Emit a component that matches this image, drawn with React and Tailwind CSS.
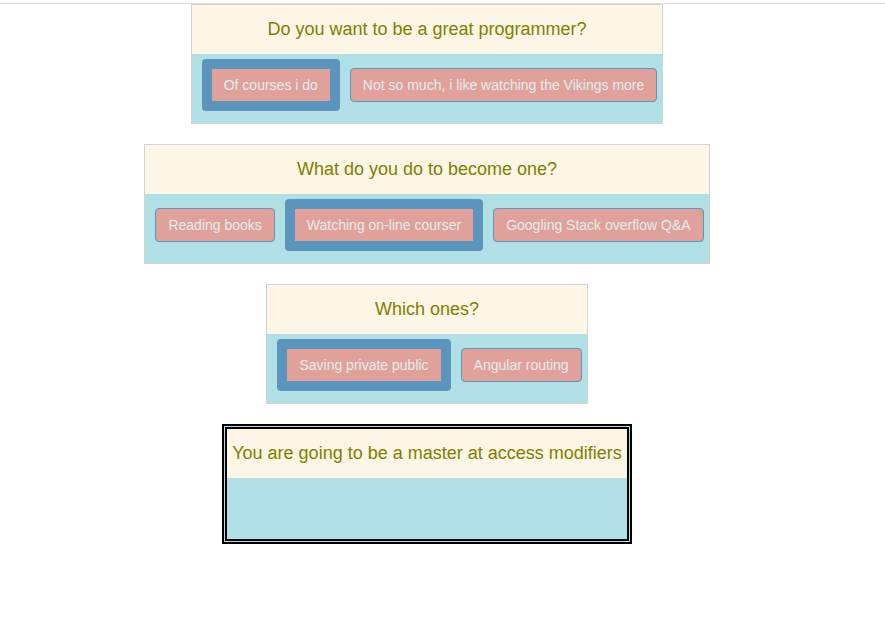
const steps = [
  {
    question: "Do you want to be a great programmer?",
    answers: ["Of courses i do", "Not so much, i like watching the Vikings more"],
    chosen: 0,
  },
  {
    question: "What do you do to become one?",
    answers: ["Reading books", "Watching on-line courser", "Googling Stack overflow Q&A"],
    chosen: 1,
  },
  {
    question: "Which ones?",
    answers: ["Saving private public", "Angular routing"],
    chosen: 0,
  },
  {
    question: "You are going to be a master at access modifiers",
    answers: [],
    final: true,
  },
];

function Answer({ label, chosen }) {
  return (
    <button
      type="button"
      aria-pressed={chosen}
      disabled
      className={
        "rounded-sm border-[#5b95bd] bg-[#e0a19a] px-3 py-1.5 text-sm whitespace-nowrap text-[#e5ecee] " +
        (chosen ? "border-10" : "border")
      }
    >
      {label}
    </button>
  );
}

function Step({ question, answers, chosen, final }) {
  return (
    <section
      className={
        "flex min-h-30 flex-col bg-[#b0e0e6] " +
        (final ? "border-5 border-double border-black" : "border border-[#d3d3d3]")
      }
    >
      <h4 className="bg-[#fdf5e6] px-[5px] pt-3.5 pb-[15px] text-center text-lg leading-5 text-[#808000]">
        {question}
      </h4>
      {answers.length > 0 && (
        <div className="flex items-center gap-2.5 pt-[5px] pr-[5px] pl-2.5">
          {answers.map((label, i) => (
            <Answer key={label} label={label} chosen={i === chosen} />
          ))}
        </div>
      )}
    </section>
  );
}

export default function App() {
  return (
    <div className="bg-white pt-[3px] font-['Liberation_Sans',Arial,sans-serif]">
      <main className="flex flex-col items-center gap-5 border-t border-[#dddddd] pr-[31px]">
        {steps.map((step) => (
          <Step key={step.question} {...step} />
        ))}
      </main>
    </div>
  );
}
